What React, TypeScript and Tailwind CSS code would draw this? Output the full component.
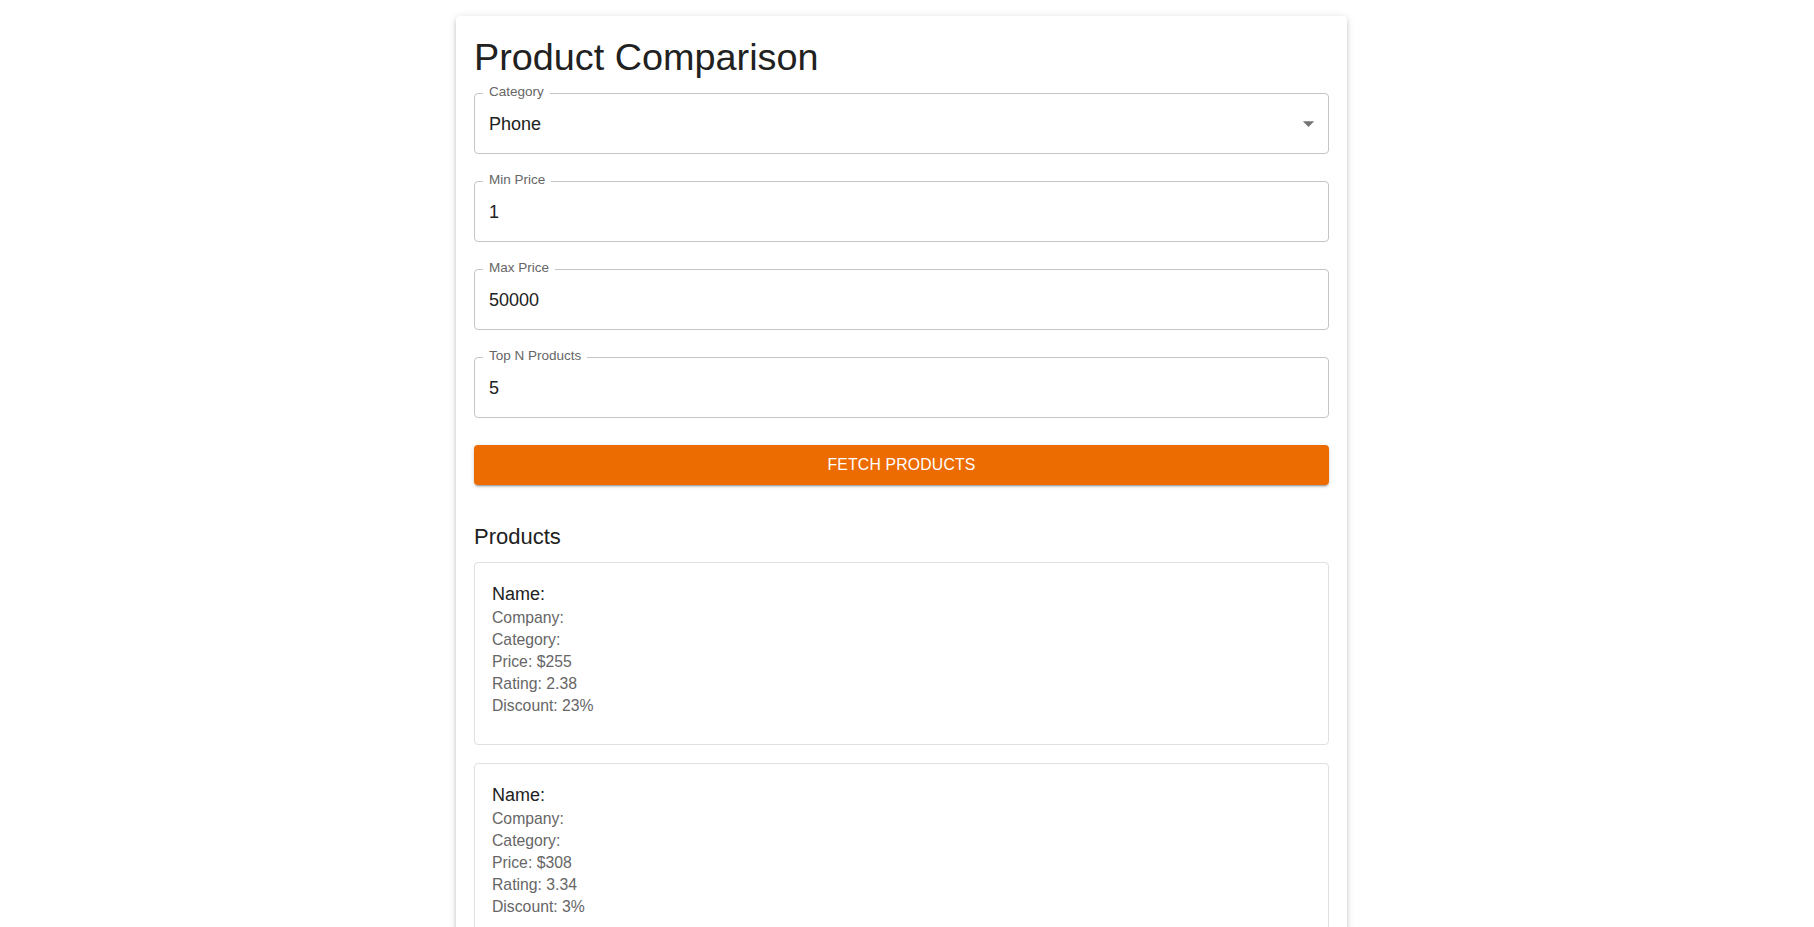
import React from "react";

type Product = { price: number; rating: number; discount: number };

const products: Product[] = [
  { price: 255, rating: 2.38, discount: 23 },
  { price: 308, rating: 3.34, discount: 3 },
  { price: 1024, rating: 4.12, discount: 15 },
  { price: 2290, rating: 1.87, discount: 42 },
  { price: 4875, rating: 4.76, discount: 9 },
];

function OutlinedField({
  label,
  value,
  select,
}: {
  label: string;
  value: string;
  select?: boolean;
}) {
  return (
    <div className="relative flex h-[61px] items-center justify-between rounded-[4px] border border-[#c4c4c4] pl-[14px] pr-[6px]">
      <span className="absolute left-[8px] top-[-9px] bg-white px-[6px] text-[13.5px] leading-none text-[#666666]">
        {label}
      </span>
      <span className="text-[18px] leading-[26px] text-[#212121]">{value}</span>
      {select && (
        <svg width="27" height="27" viewBox="0 0 24 24" aria-hidden="true">
          <path d="M7 10l5 5 5-5z" fill="#757575" />
        </svg>
      )}
    </div>
  );
}

function ProductCard({ p }: { p: Product }) {
  return (
    <div className="rounded-[4px] border border-[#e0e0e0] bg-white px-[17px] pb-[27px] pt-[18px]">
      <div className="text-[18px] leading-[26px] text-[#212121]">Name:</div>
      <div className="text-[15.75px] leading-[22px] text-[#666666]">
        <div>Company:</div>
        <div>Category:</div>
        <div>Price: ${p.price}</div>
        <div>Rating: {p.rating}</div>
        <div>Discount: {p.discount}%</div>
      </div>
    </div>
  );
}

export default function App() {
  return (
    <div className="h-[927px] overflow-hidden bg-white font-['Liberation_Sans',Arial,sans-serif]">
      <div className="flex justify-center pr-[11px] pt-4">
        <div className="w-[891px] rounded-[4px] bg-white px-[18px] pb-[18px] pt-[18px] shadow-[0px_3px_3px_-2px_rgba(0,0,0,0.2),0px_3px_4px_0px_rgba(0,0,0,0.14),0px_1px_8px_0px_rgba(0,0,0,0.12)]">
          <h1 className="text-[37.8px] leading-[47px] text-[#212121]">Product Comparison</h1>
          <div className="mt-[12px] flex flex-col gap-[27px]">
            <OutlinedField label="Category" value="Phone" select />
            <OutlinedField label="Min Price" value="1" />
            <OutlinedField label="Max Price" value="50000" />
            <OutlinedField label="Top N Products" value="5" />
          </div>
          <button className="mt-[27px] flex h-[40px] w-full items-center justify-center rounded-[4px] bg-[#ed6c02] text-[15.75px] font-medium uppercase tracking-[0.2px] text-white shadow-[0px_3px_1px_-2px_rgba(0,0,0,0.2),0px_2px_2px_0px_rgba(0,0,0,0.14),0px_1px_5px_0px_rgba(0,0,0,0.12)]">
            Fetch Products
          </button>
          <h2 className="mt-[34px] text-[22px] leading-[35px] text-[#212121]">Products</h2>
          <div className="mt-[8px] flex flex-col gap-[18px]">
            {products.map((p, i) => (
              <ProductCard key={i} p={p} />
            ))}
          </div>
        </div>
      </div>
    </div>
  );
}
